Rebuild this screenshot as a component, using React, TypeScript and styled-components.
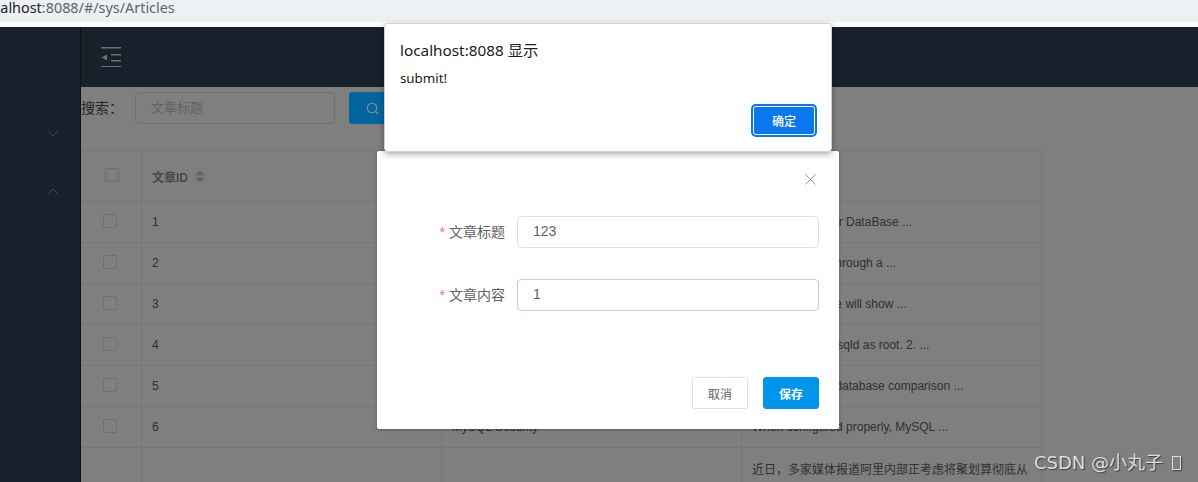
import React from "react";
import styled, { createGlobalStyle } from "styled-components";

const Global = createGlobalStyle`
  html, body { margin: 0; padding: 0; background: #fff; }
  * { box-sizing: border-box; }
`;

const SANS = `"Liberation Sans", "Noto Sans CJK SC", sans-serif`;

const Screen = styled.div`
  position: relative;
  width: 1198px;
  height: 482px;
  overflow: hidden;
  font-family: ${SANS};
`;
const AddressBar = styled.div`
  height: 22px;
  background: #eef1f3;
  overflow: hidden;
  font: 14.4px/15px "Noto Sans", sans-serif;
  color: #5f6368;
  white-space: nowrap;
  margin-bottom: 5px;
`;
const Url = styled.div`
  margin-left: -19px;
`;
const Host = styled.span`
  color: #202124;
`;
const AppArea = styled.div`
  position: relative;
  isolation: isolate;
  display: flex;
  height: 455px;
  overflow: hidden;
`;
const Mask = styled.div`
  position: absolute;
  inset: 0;
  background: rgba(0, 0, 0, 0.5);
`;
const Sidebar = styled.aside`
  width: 81px;
  flex: none;
  background: #304156;
  border-right: 1px solid #222;
  display: flex;
  flex-direction: column;
  align-items: flex-end;
  padding: 104px 22px 0 0;
  gap: 51px;
  color: #8a97a8;
`;
const Chevron = styled.svg`
  display: block;
`;
const Main = styled.main`
  flex: 1;
  min-width: 0;
  background: #fff;
`;
const Header = styled.header`
  height: 60px;
  background: #304156;
  padding: 20px 0 0 20px;
  color: #dce0e4;
`;
const Toolbar = styled.div`
  height: 63px;
  display: flex;
  align-items: flex-start;
  padding-top: 5px;
  font-size: 13px;
  color: #606266;
`;
const SearchLabel = styled.label`
  width: 54px;
  line-height: 32px;
  flex: none;
  font-size: 14px;
  font-weight: 400;
  white-space: nowrap;
  color: #4a4c50;
`;
const SearchBox = styled.div`
  width: 200px;
  height: 32px;
  border: 1px solid #dcdfe6;
  border-radius: 4px;
  padding-left: 15px;
  font-size: 13px;
  line-height: 30px;
  color: #c0c4cc;
`;
const SearchButton = styled.button`
  position: relative;
  z-index: 1;
  margin-left: 14px;
  width: 90px;
  height: 32px;
  border: 0;
  border-radius: 3px;
  background: #02669e;
  color: #8a8f94;
  padding: 0 0 0 17px;
  display: flex;
  align-items: center;
  gap: 4px;
  font: 13px ${SANS};
`;
const Table = styled.div`
  width: 961px;
  border-top: 1px solid #ebeef5;
  font-size: 12px;
  color: #606266;
`;
const Row = styled.div<{ $head?: boolean }>`
  display: grid;
  grid-template-columns: 61px 300px 300px 300px;
  height: ${(p) => (p.$head ? 51 : 41)}px;
  border-bottom: 1px solid #ebeef5;
  font-weight: ${(p) => (p.$head ? 700 : 400)};
  color: ${(p) => (p.$head ? "#909399" : "#606266")};
`;
const Cell = styled.div<{ $check?: boolean }>`
  display: flex;
  align-items: center;
  white-space: nowrap;
  overflow: hidden;
  gap: 7px;
  padding: 0 ${(p) => (p.$check ? "0" : "10px")};
  justify-content: ${(p) => (p.$check ? "center" : "flex-start")};
  border-right: 1px solid #ebeef5;
`;
const Check = styled.span<{ $head?: boolean }>`
  width: 14px;
  height: 14px;
  border: 1px solid #dcdfe6;
  border-radius: 2px;
  margin-bottom: 2px;
  margin-left: ${(p) => (p.$head ? 2 : 0)}px;
  margin-right: ${(p) => (p.$head ? 0 : 2)}px;
`;
const Sort = styled.svg`
  display: block;
  color: #c0c4cc;
`;
const Dialog = styled.div`
  position: absolute;
  left: 377px;
  top: 151px;
  width: 462px;
  height: 278px;
  background: #fff;
  border-radius: 2px;
  box-shadow: 0 1px 3px rgba(0, 0, 0, 0.3);
  display: flex;
  flex-direction: column;
  padding: 65px 20px 20px;
  font-family: ${SANS};
  font-size: 14px;
`;
const Close = styled.svg`
  position: absolute;
  left: 428px;
  top: 23px;
  color: #909399;
`;
const Field = styled.div`
  display: flex;
  align-items: center;
  height: 32px;
  margin-bottom: 31px;
`;
const FieldLabel = styled.label`
  width: 120px;
  padding-right: 12px;
  display: flex;
  justify-content: flex-end;
  align-items: center;
  line-height: 20px;
  height: 32px;
  color: #606266;
  flex: none;
`;
const Star = styled.span`
  color: #f56c6c;
  margin-right: 4px;
`;
const Input = styled.div<{ $error?: boolean }>`
  flex: 1;
  height: 32px;
  border: 1px solid ${(p) => (p.$error ? "#f1bcc3" : "#dcdfe6")};
  border-radius: 4px;
  padding-left: 15px;
  line-height: 28px;
  color: #606266;
  font-size: 14px;
`;
const Footer = styled.div`
  margin-top: auto;
  display: flex;
  justify-content: flex-end;
  gap: 15px;
`;
const Btn = styled.button<{ $primary?: boolean }>`
  width: 56px;
  height: 32px;
  border-radius: 3px;
  border: 1px solid ${(p) => (p.$primary ? "#0095ea" : "#dcdfe6")};
  background: ${(p) => (p.$primary ? "#0095ea" : "#fff")};
  color: ${(p) => (p.$primary ? "#fff" : "#606266")};
  font: ${(p) => (p.$primary ? 700 : 400)} 12px ${SANS};
  padding: 0;
`;
const Alert = styled.div`
  position: absolute;
  left: 384px;
  top: 23px;
  width: 448px;
  height: 129px;
  background: #fff;
  border: 1px solid #cfd2d4;
  border-radius: 4px;
  box-shadow: 0 2px 6px rgba(0, 0, 0, 0.35);
  padding: 15px 15px 0;
  font-family: "Noto Sans", "Noto Sans CJK SC", sans-serif;
  color: #202124;
  display: flex;
  flex-direction: column;
`;
const AlertTitle = styled.div`
  font-size: 15.3px;
  line-height: 22px;
`;
const AlertText = styled.div`
  font-size: 13.3px;
  line-height: 18px;
  margin-top: 8px;
`;
const AlertButton = styled.button`
  margin: auto 1px 16px auto;
  width: 62px;
  height: 29px;
  border-radius: 3px;
  background: #0b77ec;
  border: 1px solid #fff;
  box-shadow: 0 0 0 2px #0b77ec;
  color: #fff;
  padding: 0;
  font: 500 12px "Noto Sans CJK SC", sans-serif;
`;
const Watermark = styled.div`
  position: absolute;
  left: 1034px;
  top: 451px;
  display: flex;
  align-items: center;
  gap: 9px;
  font: 18px/24px "DejaVu Sans", "Noto Sans CJK SC", sans-serif;
  color: #dcdcdc;
  text-shadow: 1px 1px 1px rgba(0, 0, 0, 0.5);
  white-space: nowrap;
`;
const Tofu = styled.span`
  width: 9px;
  height: 14px;
  border: 1.5px solid #dcdcdc;
  box-shadow: 1px 1px 1px rgba(0, 0, 0, 0.4);
`;

const rows = [
  ["1", "MySQL Tutorial", "DBMS stands for DataBase ..."],
  ["2", "How To Use MySQL Well", "After you went through a ..."],
  ["3", "Optimizing MySQL", "In this tutorial we will show ..."],
  ["4", "1001 MySQL Tricks", "1. Never run mysqld as root. 2. ..."],
  ["5", "MySQL vs. YourSQL", "In the following database comparison ..."],
  ["6", "MySQL Security", "When configured properly, MySQL ..."],
  ["", "", "近日，多家媒体报道阿里内部正考虑将聚划算彻底从"],
];

export default function App() {
  return (
    <Screen>
      <Global />
      <AddressBar>
        <Url>
          <Host>localhost</Host>:8088/#/sys/Articles
        </Url>
      </AddressBar>
      <AppArea>
        <Sidebar>
          <Chevron width="10" height="6" viewBox="0 0 10 6" fill="none" stroke="currentColor">
            <path d="M.5.5 5 5 9.5.5" />
          </Chevron>
          <Chevron width="10" height="6" viewBox="0 0 10 6" fill="none" stroke="currentColor">
            <path d="M.5 5.5 5 1 9.5 5.5" />
          </Chevron>
        </Sidebar>
        <Main>
          <Header>
            <svg width="20" height="20" viewBox="0 0 20 20" fill="currentColor">
              <rect x="0" y="0" width="20" height="1.5" />
              <rect x="10" y="7" width="10" height="1.5" />
              <rect x="10" y="13" width="10" height="1.5" />
              <rect x="0" y="19" width="20" height="1.5" />
              <path d="M0.5 10.5 6 7.5V13.5Z" />
            </svg>
          </Header>
          <Toolbar>
            <SearchLabel>搜索：</SearchLabel>
            <SearchBox>文章标题</SearchBox>
            <SearchButton>
              <svg width="13" height="13" viewBox="0 0 13 13" fill="none" stroke="currentColor" strokeWidth="1.1">
                <circle cx="6" cy="6" r="4.8" />
                <path d="M9.5 9.5 12 12" />
              </svg>
              查询
            </SearchButton>
          </Toolbar>
          <Table>
            <Row $head>
              <Cell $check>
                <Check $head />
              </Cell>
              <Cell>
                文章ID
                <Sort width="10" height="13" viewBox="0 0 10 13" fill="currentColor">
                  <path d="M5 .5 9.8 5.5H.2ZM5 12.5 .2 7.5H9.8Z" />
                </Sort>
              </Cell>
              <Cell>文章标题</Cell>
              <Cell>文章内容</Cell>
            </Row>
            {rows.map((r, i) => (
              <Row key={i}>
                <Cell $check>{r[0] && <Check />}</Cell>
                <Cell>{r[0]}</Cell>
                <Cell>{r[1]}</Cell>
                <Cell>{r[2]}</Cell>
              </Row>
            ))}
          </Table>
        </Main>
        <Mask />
      </AppArea>
      <Dialog>
        <Close width="11" height="11" viewBox="0 0 11 11" fill="none" stroke="currentColor">
          <path d="M.5.5 10.5 10.5M10.5.5.5 10.5" />
        </Close>
        <Field>
          <FieldLabel>
            <Star>*</Star>文章标题
          </FieldLabel>
          <Input>123</Input>
        </Field>
        <Field>
          <FieldLabel>
            <Star>*</Star>文章内容
          </FieldLabel>
          <Input $error>1</Input>
        </Field>
        <Footer>
          <Btn>取消</Btn>
          <Btn $primary>保存</Btn>
        </Footer>
      </Dialog>
      <Alert>
        <AlertTitle>localhost:8088 显示</AlertTitle>
        <AlertText>submit!</AlertText>
        <AlertButton>确定</AlertButton>
      </Alert>
      <Watermark>
        CSDN @小丸子
        <Tofu />
      </Watermark>
    </Screen>
  );
}
